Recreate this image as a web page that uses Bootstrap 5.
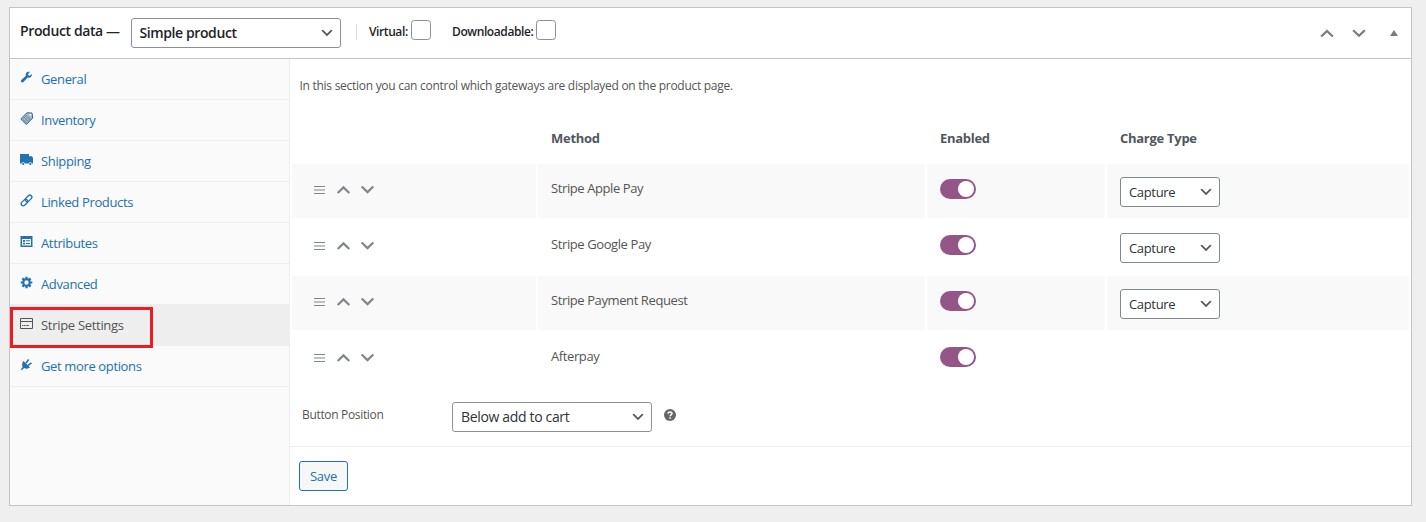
<!DOCTYPE html>
<html lang="en">
<head>
<meta charset="utf-8">
<meta name="viewport" content="width=device-width, initial-scale=1">
<title>Product data</title>
<link href="https://cdn.jsdelivr.net/npm/bootstrap@5.3.0/dist/css/bootstrap.min.css" rel="stylesheet">
<style>
  body { background: #efefef; font-family: "Open Sans", "Noto Sans", sans-serif; font-size: 13px; color: #50575e; overflow: hidden; }
  .product-box { width: 1403px; height: 499px; margin: 7px 0 0 9px; border: 1px solid #c3c4c7; border-radius: 0; box-shadow: 0 1px 1px rgba(0,0,0,.04); color: #555; }
  .box-head { height: 51px; border-bottom: 1px solid #c3c4c7; color: #1d2327; padding-left: 10px; background: #fff; }
  .box-title { font-size: 14px; font-weight: 600; width: 111px; letter-spacing: -.38px; line-height: 20px; margin-top: -4px; white-space: nowrap; }
  .wp-select { height: 30px; font-size: 13px; line-height: 28px; padding: 0 24px 0 8px; border: 1px solid #8c8f94; border-radius: 3px; color: #2c3338;
    background: #fff url("data:image/svg+xml,%3Csvg xmlns='http://www.w3.org/2000/svg' viewBox='0 0 20 20'%3E%3Cpath d='M5 6l5 5 5-5 2 1-7 7-7-7 2-1z' fill='%23555'/%3E%3C/svg%3E") no-repeat right 5px top 50% / 16px 16px; }
  .type-select { width: 210px; font-size: 14px; font-weight: 600; letter-spacing: -.4px; color: #1d2327; padding-left: 7.5px; }
  .head-rule { width: 1px; height: 16px; background: #ddd; margin: -3px 12px 0 15px; }
  .head-check { margin-top: -7px; }
  .head-label { font-size: 12px; font-weight: 600; letter-spacing: -.4px; line-height: 18px; white-space: nowrap; padding-top: 5px; }
  .wp-check { width: 20px; height: 20px; margin: 0; border: 1px solid #8c8f94; border-radius: 4px; }
  .box-head svg { fill: #787c82; }
  .head-tools { padding-right: 13px; }
  .side-tabs { width: 280px; background: #fafafa; border-right: 1px solid #eee; }
  .side-tabs .nav-link { height: 41px; padding: 0 0 0 10px; border-bottom: 1px solid #eee; border-radius: 0; color: #2271b1; font-size: 13px; letter-spacing: -.36px; line-height: 20px; gap: 8px; }
  .side-tabs .nav-link svg { width: 13px; height: 13px; margin-top: -3px; overflow: visible; fill: currentColor; flex: none; }
  .side-tabs .nav-link.active { background: #eee; color: #555; letter-spacing: -.3px; }
  .callout-frame { left: 0; top: 248px; width: 143px; height: 41px; border: 3px solid #ed1c24; }
  .intro { font-size: 12px; line-height: 18px; letter-spacing: -.275px; padding: 18px 0 0 9.5px; height: 47px; }
  .gateways { width: 1121px; border-collapse: separate; border-spacing: 2px; table-layout: fixed; }
  .gateways th { height: 54px; padding: 6px 13px 0; font-weight: 700; letter-spacing: -.28px; line-height: 20px; vertical-align: middle; color: #50575e; }
  .gateways td { height: 54px; padding: 0 13px; letter-spacing: -.4px; vertical-align: top; }
  .gateways tbody tr:nth-child(odd) td { background: #f9f9f9; }
  .method-name { margin-top: 14px; line-height: 20px; }
  .sorters { margin: 18px 0 0 6px; gap: 8px; fill: #82878c; }
  .wp-toggle { width: 36px; height: 20px; border-radius: 10px; background: #935687; margin-top: 15px; padding: 2px; }
  .wp-toggle span { width: 16px; height: 16px; border-radius: 50%; background: #fff; }
  .charge-select { width: 100px; margin-top: 13px; border-color: #7e8993; letter-spacing: -.34px; }
  .position-row { height: 59px; border-bottom: 1px solid #eee; padding: 0 0 1px 12px; font-size: 12px; letter-spacing: -.33px; }
  .position-row label { width: 150px; margin-top: -4px; }
  .position-select { width: 200px; font-size: 14px; letter-spacing: -.34px; }
  .save-btn { margin: 14px 0 0 9px; width: 49px; height: 30px; padding: 0; font-size: 13px; letter-spacing: -.25px; line-height: 28px; color: #2271b1; border: 1px solid #2271b1; border-radius: 3px; background: #f6f7f7; }
</style>
</head>
<body>
<main class="product-box card">
  <header class="box-head d-flex align-items-center flex-shrink-0">
    <h2 class="box-title mb-0">Product data —</h2>
    <select class="form-select wp-select type-select flex-shrink-0" aria-label="Product type"><option>Simple product</option></select>
    <span class="head-rule"></span>
    <label class="head-check d-flex align-items-center" style="width:83px"><span class="head-label" style="width:42px">Virtual:</span><input class="form-check-input wp-check" type="checkbox"></label>
    <label class="head-check d-flex align-items-center"><span class="head-label" style="width:84px">Downloadable:</span><input class="form-check-input wp-check" type="checkbox"></label>
    <div class="head-tools d-flex align-items-center ms-auto">
      <svg width="14" height="9" viewBox="0 0 14 9"><path d="M7 .5.400 6.800 1.900 8.200 7 3.500l5.100 4.700 1.500-1.400z"/></svg>
      <svg width="14" height="9" viewBox="0 0 14 9" style="margin:0 24px 0 18px"><path d="M7 8.200.400 1.900 1.900.500 7 5.200 12.100.500l1.500 1.400z"/></svg>
      <svg width="8" height="6" viewBox="0 0 8 6" style="margin-top:-1px"><path d="M4 0 8 6H0z"/></svg>
    </div>
  </header>
  <div class="d-flex flex-grow-1 position-relative">
    <nav class="side-tabs nav flex-column flex-nowrap flex-shrink-0">
      <a class="nav-link d-flex align-items-center" href="#"><svg viewBox="0 0 13 13"><path d="M11.800 3.100 9.900 4.700 8.400 4.300 8.100 2.900 9.900 1.100C8.300.5 6.500 1.100 5.900 2.700c-.3.700-.3 1.400 0 2L1.300 9c-.6.600-.6 1.500 0 2.100s1.500.6 2.100 0l4.400-4.500c2.500.9 4.700-1.200 4-3.500z"/></svg>General</a>
      <a class="nav-link d-flex align-items-center" href="#"><svg viewBox="0 0 13 13"><path d="M6.800.800 12 1l.7 5L6.300 12.500.8 7z" fill="#a9b9c8" stroke="#2c6696"/><path d="m3 7 4-4M4.500 9 9 4.500M6 10.500 10.500 6M4 5l5 5M6 3.500l4.500 4.500M2.500 7l4 4" stroke="#54799a" stroke-width=".6"/><circle cx="10.500" cy="2.800" r="1" fill="#fff"/></svg>Inventory</a>
      <a class="nav-link d-flex align-items-center" href="#"><svg viewBox="0 0 13 13"><path d="M0 1h9v2.200h3L13 5v5.500h-1.100a1.600 1.600 0 0 0-3.100 0H4.700a1.600 1.600 0 0 0-3.100 0H0z"/><circle cx="3.150" cy="11" r="1.100"/><circle cx="10.350" cy="11" r="1.100"/></svg>Shipping</a>
      <a class="nav-link d-flex align-items-center" href="#"><svg viewBox="0 0 13 13"><g transform="rotate(-45 6.500 6.500)" fill="none" stroke="currentColor" stroke-width="1.300"><rect x="-.2" y="4.500" width="7.600" height="4" rx="2"/><rect x="5.600" y="4.500" width="7.600" height="4" rx="2"/></g></svg>Linked Products</a>
      <a class="nav-link d-flex align-items-center" href="#"><svg viewBox="0 0 13 13"><path fill-rule="evenodd" d="M.5 1h12v11H.5zM2 4v6.500h9V4z"/><path d="M3 5h2v2H3zm3 .3h4v1H6zM3 8h2v1.500H3zm3 0h4v1H6z"/></svg>Attributes</a>
      <a class="nav-link d-flex align-items-center" href="#"><svg viewBox="0 0 13 13"><circle cx="6.500" cy="6.500" r="3.300" fill="none" stroke="currentColor" stroke-width="2.200"/><path d="M6.500.7v2M6.500 10.300v2M.7 6.500h2M10.300 6.500h2M2.400 2.400l1.500 1.500M9.100 9.100l1.500 1.500M2.400 10.600l1.500-1.500M9.100 3.900l1.500-1.500" stroke="currentColor" stroke-width="2.200"/></svg>Advanced</a>
      <a class="nav-link active d-flex align-items-center" href="#"><svg viewBox="0 0 13 13"><path d="M.5 1.500h12v10H.5zM.5 4.500h12" fill="none" stroke="currentColor"/><path d="M2 8h1.500v1H2zm2 0h1.500v1H4zm2.200 0h2.500v1H6.200z"/></svg>Stripe Settings</a>
      <a class="nav-link d-flex align-items-center" href="#"><svg viewBox="0 0 13 13"><path d="m3.500 3 6.500 6.300c-1.600 1.500-4 1.800-5.800.7L1.800 12.200.8 11.300 2.700 9C1.700 7 2 4.700 3.500 3z"/><path d="m6 5 2.700-3.500M8.200 7.300l3.300-2.500" stroke="currentColor" stroke-width="1.500"/></svg>Get more options</a>
    </nav>
    <div class="callout-frame position-absolute"></div>
    <section class="flex-grow-1">
      <p class="intro mb-0">In this section you can control which gateways are displayed on the product page.</p>
      <table class="gateways">
        <colgroup><col style="width:244px"><col style="width:387px"><col style="width:178px"><col></colgroup>
        <thead><tr><th></th><th>Method</th><th>Enabled</th><th>Charge Type</th></tr></thead>
        <tbody id="rows"></tbody>
      </table>
      <div class="position-row d-flex align-items-center">
        <label for="pos">Button Position</label>
        <select id="pos" class="form-select wp-select position-select"><option>Below add to cart</option></select>
        <svg width="12" height="12" viewBox="0 0 12 12" style="margin:-3px 0 0 12px"><circle cx="6" cy="6" r="6" fill="#666"/><path d="M4 4.700C4 2.300 8 2.300 8 4.600 8 6 6.100 5.900 6.100 7.300M6.100 8.300v1.500" fill="none" stroke="#fff" stroke-width="1.500"/></svg>
      </div>
      <button class="btn save-btn" type="button">Save</button>
    </section>
  </div>
</main>
<script>
  const charge = '<select class="form-select wp-select charge-select" aria-label="Charge type"><option>Capture</option></select>';
  document.getElementById('rows').innerHTML = [['Stripe Apple Pay', 1], ['Stripe Google Pay', 1], ['Stripe Payment Request', 1], ['Afterpay', 0]].map(([name, hasCharge]) => `
    <tr>
      <td><div class="sorters d-flex align-items-center">
        <svg width="16" height="16" viewBox="0 0 16 16"><path d="M3 4h11v1H3zm0 3.500h11v1H3zm0 3.500h11v1H3z"/></svg>
        <svg width="16" height="16" viewBox="0 0 16 16"><path d="M8.500 3.800 1.900 10.300 3.400 11.700l5.100-4.800 5.100 4.800 1.500-1.400z"/></svg>
        <svg width="16" height="16" viewBox="0 0 16 16"><path d="M8.500 11.700 1.900 5.200 3.400 3.800l5.100 4.800 5.100-4.800 1.500 1.400z"/></svg>
      </div></td>
      <td><div class="method-name">${name}</div></td>
      <td><div class="wp-toggle d-flex justify-content-end"><span></span></div></td>
      <td>${hasCharge ? charge : ''}</td>
    </tr>`).join('');
</script>
<script src="https://cdn.jsdelivr.net/npm/bootstrap@5.3.0/dist/js/bootstrap.bundle.min.js"></script>
</body>
</html>
